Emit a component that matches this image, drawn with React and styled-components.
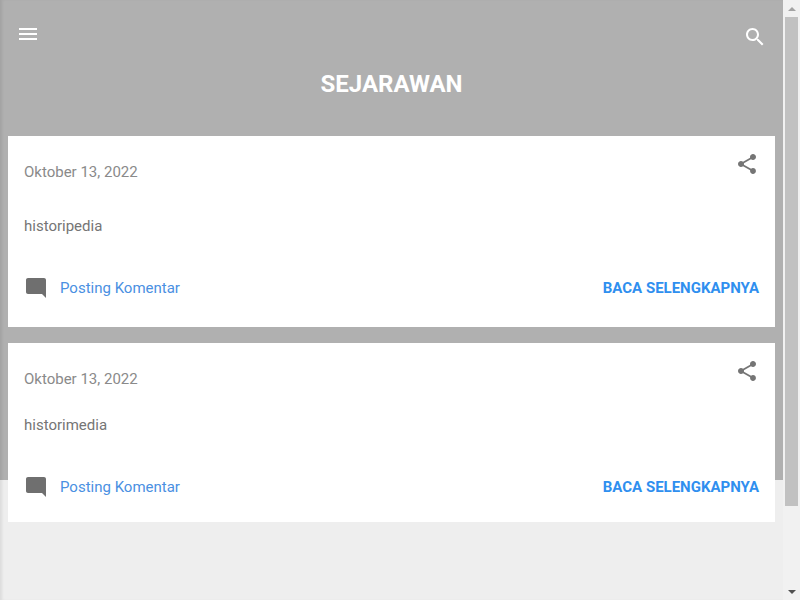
import React from 'react';
import styled, { createGlobalStyle } from 'styled-components';

const GlobalStyle = createGlobalStyle`
  html, body {
    margin: 0;
    height: 100%;
    overflow: hidden;
  }

  body {
    font-family: Roboto, "Liberation Sans", sans-serif;
  }
`;

const Screen = styled.div`
  display: flex;
  width: 800px;
  height: 600px;
  overflow: hidden;
`;

const Page = styled.main`
  flex: 1;
  background: linear-gradient(#b0b0b0 0, #b0b0b0 480px, #eeeeee 480px);
  box-shadow: inset 3px 0 3px -1px rgba(0, 0, 0, 0.08);
`;

const Header = styled.header`
  height: 136px;
  padding: 22px 16px 0;
  box-sizing: border-box;
`;

const HeaderIcons = styled.div`
  display: flex;
  justify-content: space-between;
  align-items: flex-start;
`;

const SearchWrap = styled.div`
  margin-top: 3px;
`;

const Title = styled.h1`
  margin: 0;
  padding-top: 20px;
  font-size: 24px;
  line-height: 30px;
  font-weight: 700;
  color: #ffffff;
  text-align: center;
`;

const Posts = styled.div`
  display: flex;
  flex-direction: column;
  gap: 16px;
  padding: 0 8px;
`;

const Card = styled.article`
  background: #ffffff;
  padding: 16px 16px ${(p) => p.$bottom}px;
`;

const CardTop = styled.div`
  display: flex;
  justify-content: space-between;
  align-items: flex-start;
  height: 30px;
`;

const PostDate = styled.time`
  margin-top: 10px;
  font-size: 15px;
  line-height: 20px;
  font-weight: 400;
  color: #8a8a8a;
`;

const Snippet = styled.p`
  margin: ${(p) => p.$top}px 0 0;
  font-size: 15px;
  line-height: 20px;
  color: #757575;
`;

const CardFooter = styled.div`
  display: flex;
  justify-content: space-between;
  align-items: center;
  height: 24px;
  margin-top: 40px;
`;

const Comments = styled.a`
  display: flex;
  align-items: center;
  gap: 12px;
  font-size: 15px;
  color: #4a90e2;
`;

const ReadMore = styled.a`
  font-size: 15px;
  font-weight: 700;
  color: #2f8fef;
`;

const Icon = styled.svg`
  display: block;
  width: 24px;
  height: 24px;
  fill: ${(p) => p.$color};
`;

const Scrollbar = styled.div`
  display: flex;
  flex-direction: column;
  width: 17px;
  background: #f1f1f1;
`;

const ScrollButton = styled.div`
  display: flex;
  align-items: center;
  justify-content: center;
  height: 17px;
  flex: none;
`;

const Arrow = styled.span`
  width: 0;
  height: 0;
  border-left: 4px solid transparent;
  border-right: 4px solid transparent;
  ${(p) => (p.$up ? 'border-bottom: 4px solid #a3a3a3;' : 'border-top: 4px solid #505050;')}
`;

const ScrollTrack = styled.div`
  flex: 1;
  padding: 0 2px;
`;

const ScrollThumb = styled.div`
  height: 489px;
  background: #c1c1c1;
`;

const MenuIcon = () => (
  <Icon viewBox="0 0 24 24" $color="#ffffff">
    <path d="M3 18h18v-2H3v2zm0-5h18v-2H3v2zm0-7v2h18V6H3z" />
  </Icon>
);

const SearchIcon = () => (
  <Icon viewBox="0 0 24 24" $color="#ffffff">
    <path d="M15.5 14h-.79l-.28-.27C15.41 12.59 16 11.11 16 9.5 16 5.91 13.09 3 9.5 3S3 5.91 3 9.5 5.91 16 9.5 16c1.61 0 3.09-.59 4.23-1.57l.27.28v.79l5 4.99L20.49 19l-4.99-5zm-6 0C7.01 14 5 11.99 5 9.5S7.01 5 9.5 5 14 7.01 14 9.5 11.99 14 9.5 14z" />
  </Icon>
);

const ShareIcon = () => (
  <Icon viewBox="0 0 24 24" $color="#757575">
    <path d="M18 16.08c-.76 0-1.44.3-1.96.77L8.91 12.7c.05-.23.09-.46.09-.7s-.04-.47-.09-.7l7.05-4.11c.54.5 1.25.81 2.04.81 1.66 0 3-1.34 3-3s-1.34-3-3-3-3 1.34-3 3c0 .24.04.47.09.7L8.04 9.81C7.5 9.31 6.79 9 6 9c-1.66 0-3 1.34-3 3s1.34 3 3 3c.79 0 1.5-.31 2.04-.81l7.12 4.16c-.05.21-.08.43-.08.65 0 1.61 1.31 2.92 2.92 2.92 1.61 0 2.92-1.31 2.92-2.92s-1.31-2.92-2.92-2.92z" />
  </Icon>
);

const CommentIcon = () => (
  <Icon viewBox="0 0 24 24" $color="#6f6f6f">
    <path d="M21.99 4c0-1.1-.89-2-1.99-2H4c-1.1 0-2 .9-2 2v12c0 1.1.9 2 2 2h14l4 4-.01-18z" />
  </Icon>
);

const posts = [
  { snippet: 'historipedia', top: 34, bottom: 27 },
  { snippet: 'historimedia', top: 26, bottom: 23 },
];

const App = () => (
  <Screen>
    <GlobalStyle />
    <Page>
      <Header>
        <HeaderIcons>
          <MenuIcon />
          <SearchWrap><SearchIcon /></SearchWrap>
        </HeaderIcons>
        <Title>SEJARAWAN</Title>
      </Header>
      <Posts>
        {posts.map((post) => (
          <Card key={post.snippet} $bottom={post.bottom}>
            <CardTop>
              <PostDate>Oktober 13, 2022</PostDate>
              <ShareIcon />
            </CardTop>
            <Snippet $top={post.top}>{post.snippet}</Snippet>
            <CardFooter>
              <Comments><CommentIcon />Posting Komentar</Comments>
              <ReadMore>BACA SELENGKAPNYA</ReadMore>
            </CardFooter>
          </Card>
        ))}
      </Posts>
    </Page>
    <Scrollbar>
      <ScrollButton><Arrow $up /></ScrollButton>
      <ScrollTrack><ScrollThumb /></ScrollTrack>
      <ScrollButton><Arrow /></ScrollButton>
    </Scrollbar>
  </Screen>
);

export default App;
